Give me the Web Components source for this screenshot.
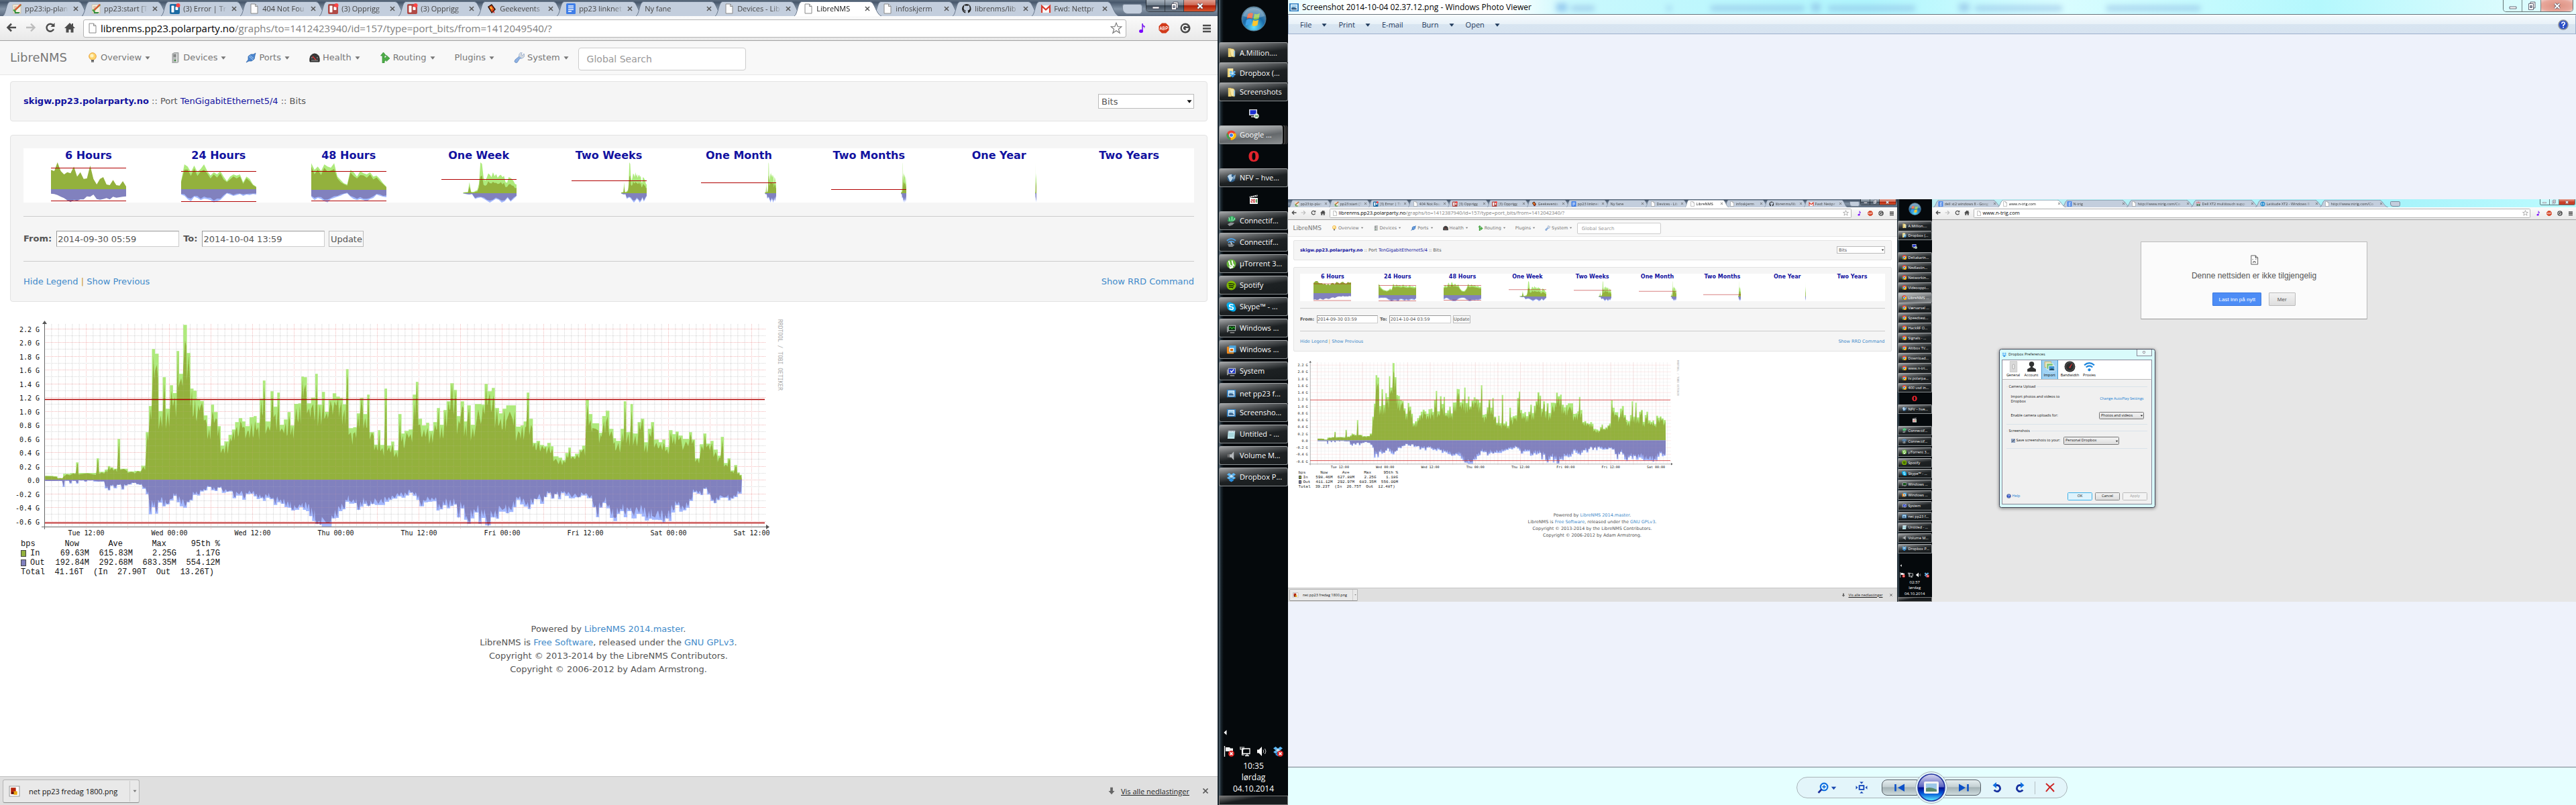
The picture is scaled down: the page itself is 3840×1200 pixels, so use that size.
<!DOCTYPE html>
<html lang="no">
<head>
<meta charset="utf-8">
<title>Desktop</title>
<style>
html,body{margin:0;height:100%;overflow:hidden}
body{font:11px/16px "Open Sans","Noto Sans",sans-serif;color:#111;background:#eef2fb}
</style>
</head>
<body>
<desk-top></desk-top>
<script>
const define = (name, css, html) => customElements.define(name, class extends HTMLElement {
  connectedCallback() {
    if (this.shadowRoot) return;
    const t = document.createElement('template');
    t.innerHTML = `<style>*{box-sizing:border-box}${css}</style>` + html(this);
    this.attachShadow({mode: 'open'}).append(t.content.cloneNode(true));
  }
});

/* ---------- icons ---------- */
const dbx = '<path d="M4.5 1 8 3.8 4.5 6.2 1 3.6zM11.5 1 15 3.6 11.5 6.2 8 3.8zM4.5 6.4 8 8.8 4.5 11.5 1 9zM11.5 6.4 15 9l-3.5 2.5L8 8.8z" fill="#5db8f8"/><path d="m8 9.4 3.5 2.6v1.2L8 15.4l-3.5-2.2V12z" fill="#2b8fe0"/><path d="m8 3.8 3.5 2.5L8 8.8 4.500 6.300z" fill="#bfe6ff"/>';
const monitor = '<path d="M3 3h12v9H3z" fill="#c8ccd0"/><path d="M6 14h7v1.500H6z" fill="#aaa"/><path d="M1 5h2v9H1z" fill="#9a9ea2"/>';
const badge = '<circle cx="11.500" cy="11.500" r="4.500" fill="#d22"/><path d="m9.500 9.500 4 4m0-4-4 4" stroke="#fff" stroke-width="1.600"/>';
const photo = '<path d="M1 2h14v12H1z" fill="#2f7fc2"/><path d="M3 3.500h10v9H3z" fill="#fff"/><path d="M4 4.500h8v4H4z" fill="#9fd0ee"/><path d="M4 8.500q4-2 8 1v2H4z" fill="#35608a"/>';
const ICONS = {
  leaf: '<path d="M2 2h10l2 2v11H3z" fill="#f4efe2" stroke="#c9b28a" stroke-width=".6"/><path d="m2 10 4-2 8-7 1 2-8 7-1 4z" fill="#4aa845"/><path d="m13 1-8 8 1 2 9-9z" fill="#e4512f"/><path d="m4 10 3 3 6 0-2 2H5z" fill="#2c8a3a"/><path d="M4 5h4M4 7h3" stroke="#c85" stroke-width=".8"/>',
  trelloB: '<rect x="0" y="1" width="15" height="15" rx="2" fill="#1a6aa3"/><rect x="2.500" y="3.500" width="4" height="10" rx=".8" fill="#fff"/><rect x="8.500" y="5" width="4" height="5" rx=".8" fill="#fff"/><circle cx="12.500" cy="3" r="3" fill="#f44"/>',
  trelloR: '<rect x="0" y="1" width="15" height="15" rx="2" fill="#b04a46"/><rect x="2.500" y="3.500" width="4" height="10" rx=".8" fill="#fff"/><rect x="8.500" y="5" width="4" height="5" rx=".8" fill="#fff"/><circle cx="12.500" cy="3" r="3" fill="#f44"/>',
  doc: '<path d="M3 1h6.500l3.500 3.500V15H3z" fill="#fdfdfd" stroke="#8a8a8a"/><path d="M9.500 1v3.500H13" fill="none" stroke="#8a8a8a"/>',
  gem: '<path d="m2 5 6-4 6 8-6 6z" fill="#2a1208"/><path d="m4 5 4-2 4 6-4 4z" fill="#e8541c"/><path d="m5 6 2-1 2 3-2 1z" fill="#f8c33a"/><path d="M9 12h3v3z" fill="#d22"/>',
  gdoc: '<rect x="1" width="14" height="16" rx="1.500" fill="#3f7ee8"/><path d="M4 4h8M4 6.700h8M4 9.400h8M4 12h5" stroke="#fff" stroke-width="1.300"/>',
  github: '<path d="M8 1a7 7 0 0 0-2.300 13.600c.4.100.5-.2.500-.4v-2c-2 .4-2.400-1-2.400-1-.5-1-1-1.200-1-1.200 1.400 0 1.600 1 1.600 1 .8 1 1.600.6 1.900.5 0-.5.300-.8.500-1-1.700-.2-3.300-.9-3.300-3.500 0-.8.300-1.400.7-2 0-.2-.3-1 .1-2 0 0 .6-.2 2 .7a7 7 0 0 1 3.600 0c1.400-.9 2-.7 2-.7.4 1 .1 1.800.1 2 .4.600.7 1.200.7 2 0 2.600-1.600 3.300-3.300 3.500.3.200.6.700.6 1.400v2c0 .3.100.5.500.4A7 7 0 0 0 8 1z" fill="#222"/>',
  gmail: '<path d="M1 3h14v11H1z" fill="#fafafa" stroke="#ddd" stroke-width=".5"/><path d="M2 14V4l6 5.500L14 4v10" fill="none" stroke="#d8392b" stroke-width="2.200"/>',
  google: '<rect x="1" y="0" width="14" height="16" rx="1" fill="#4a86e8"/><circle cx="8" cy="5.500" r="2.200" fill="none" stroke="#fff" stroke-width="1.400"/><circle cx="8" cy="11.500" r="2.400" fill="none" stroke="#fff" stroke-width="1.400"/><path d="M10 3.500 12 3" stroke="#fff"/>',
  dots: '<path d="M2 2h3v5H2zM6 1h4v5H6zM11 2h3v5h-3z" fill="#d48a94"/><path d="M3 8h4v6H3zM9 8h4v6H9z" fill="#4d7a58"/>',
  hp: '<circle cx="8" cy="8" r="7" fill="#2b8fd0"/><path d="M4 8h3m2 0h3M5 5v6m6-6v6" stroke="#fff" stroke-width="1.300"/>',
  back: '<path d="M15 8H3M8 2.500 2.500 8 8 13.500" fill="none" stroke="#4c4c4c" stroke-width="2.600"/>',
  fwd: '<path d="M1 8h12M8 2.500 13.500 8 8 13.500" fill="none" stroke="#bdbdbd" stroke-width="2.400"/>',
  reload: '<path d="M13 10.500A5.500 5.500 0 1 1 12.500 5" fill="none" stroke="#4c4c4c" stroke-width="2.400"/><path d="M14.500 1v6h-6z" fill="#4c4c4c"/>',
  home: '<path d="M8 1 0 9h2.500v6.500h4V11h3v4.500h4V9H16l-3-3V2h-2v2z" fill="#4c4c4c"/>',
  star: '<path d="m8 1 2 5h5l-4 3.300 1.600 5.200L8 11.300l-4.600 3.200L5 9.300 1 6h5z" fill="#fff" stroke="#777"/>',
  note: '<path d="M8 1v11" stroke="#7a1ff0" stroke-width="1.600"/><path d="M8 1q1 3 4 4-1 2-1 4 0-3-3-4z" fill="#7a1ff0"/><ellipse cx="6" cy="12.500" rx="3" ry="2.500" fill="#7a00ff"/>',
  abp: '<path d="M5 .5h6L15.500 5v6L11 15.500H5L.5 11V5z" fill="#d23a1a"/><path d="m2 10.500 1.500-5L5 10.500M2.600 9h1.800M6.500 10.500v-5h1q1.500 0 1.500 1.200T7.500 8Q9.300 8 9.300 9.300T7.500 10.500zM11 10.500v-5h1.300q1.500 0 1.500 1.500T12.300 8.500H11" fill="none" stroke="#fff"/>',
  gbadge: '<circle cx="8" cy="8" r="7.500" fill="#4a4a4a"/><path d="M11 5.500A4 4 0 1 0 11.600 9H8.500" fill="none" stroke="#fff" stroke-width="1.900"/>',
  menu: '<path d="M2 4h12M2 8.500h12M2 13h12" stroke="#4c4c4c" stroke-width="2.600"/>',
  bulb: '<circle cx="8" cy="6" r="5.300" fill="#ffd46b" stroke="#e8a23c"/><circle cx="7" cy="5" r="2.600" fill="#fff3c0"/><path d="M6 11h4v4H6z" fill="#8c8c8c"/><path d="M6 12.500h4" stroke="#444"/>',
  server: '<path d="m4 2 3-1.500h6v14L10 16H4z" fill="#b9bcbc" stroke="#878b8b" stroke-width=".7"/><path d="M5.500 4h4M5.500 6h4" stroke="#555"/><circle cx="8" cy="12" r="1.300" fill="#3b8a3b"/><path d="M10.500 2v13" stroke="#eee"/>',
  plug: '<path d="m1 15 3-4 0-5 4-3 4 0 3-2-1 4-1 5-4 3-4 0z" fill="#4a86cf" stroke="#2a5fa5" stroke-width=".7"/><path d="m5 6 6 5M7 5l5 4" stroke="#b7d5f5"/>',
  gauge: '<path d="M1 14Q-.5 3 8 2q8.500 1 7 12z" fill="#3a3a3a" stroke="#222"/><path d="m5 6 5 5.500" stroke="#e33" stroke-width="1.200"/><path d="M3 12h10" stroke="#999"/><circle cx="4" cy="8" r=".7" fill="#ddd"/><circle cx="12" cy="8" r=".7" fill="#ddd"/>',
  route: '<path d="M4 16V5H1.500L5.500 0l4 5H7v4l3-2V4.500l5 4.500-5 4.500V11l-3 2.500V16z" fill="#4fae48" stroke="#2e8a30" stroke-width=".7"/>',
  wrench: '<path d="M2 15q-2-1 0-4l6-5q-1-5 4-6l-1 4 2 1 2-3q2 5-3 7l-3 0-4 6q-1 1-3 0z" fill="#8fb3e4" stroke="#5a7fb5" stroke-width=".7"/><path d="M8 6q-1-5 4-6l-1 4 2 1 2-3q2 5-3 7z" fill="#d3d8de"/>',
  caret: '<path d="M4 6h8l-4 5z" fill="currentColor"/>',
  folder: '<path d="M3 1h5v14H3z" fill="#e9cf73"/><path d="M5 2h6l2 2v11l-5-1z" fill="#f6e6a4" stroke="#c7a84a" stroke-width=".6"/><path d="M12 5h2v9h-2z" fill="#8dbcdc"/>',
  folderdb: '<path d="M2 1h5v14H2z" fill="#e9cf73"/><path d="M4 1h7v12H4z" fill="#f6e6a4"/><g transform="translate(4 4) scale(.75)">' + dbx + '</g>',
  rdp: '<path d="M1 2h12v9H1z" fill="#d8dce0"/><path d="M2.500 3.300h9v6.300h-9z" fill="#1a2ed0"/><path d="M4 12h6v2H4z" fill="#aaa"/><circle cx="12" cy="12" r="3.700" fill="#e9efe6"/><path d="m10 10.500 2 1.500-2 1.500m4.500-3L12.500 12l2 1.500" stroke="#2a8a2a" fill="none"/>',
  chrome: '<circle cx="8" cy="8" r="7.500" fill="#ea4335"/><path d="M1.500 4.300 5 11l2 4.400A7.500 7.500 0 0 1 1.500 4.300z" fill="#34a853"/><path d="M8 5h7a7.500 7.500 0 0 1-8 10.500z" fill="#fbbc05"/><circle cx="8" cy="8" r="3.600" fill="#fff"/><circle cx="8" cy="8" r="2.700" fill="#3d7be8"/>',
  opera: '<path fill-rule="evenodd" d="M8 0c5 0 7.500 3.500 7.500 8S13 16 8 16 .5 12.500.5 8 3 0 8 0zm0 2.500C6 2.500 5.500 5 5.500 8S6 13.500 8 13.500 10.500 11 10.500 8 10 2.500 8 2.500z" fill="#e2242c"/>',
  globe: '<circle cx="8" cy="8" r="6.500" fill="#2d5d8a"/><path d="M2 5q3-4 7-3l-1 3 3 2-2 4-3 3-2-5z" fill="#b9d4e8"/><path d="m11 5 4-3-1 6-3 3z" fill="#87a9c5"/>',
  clap: '<path d="M2 6h12v9H2z" fill="#f4f4f4"/><path d="m1.500 4 12-2.500.5 2L2 6z" fill="#eee"/><path d="m3 4 1 1.500M6 3.500 7 5m2-2 1 1.500M12 2l1 1.500" stroke="#111"/><path d="M4 8.500h2v2H4v2h2m1.500-4h2v4h-2z" stroke="#c33" fill="none"/><path d="M12 8v5" stroke="#2a8a2a" stroke-width="1.500"/>',
  conG: '<path d="M2 8Q4 0 9 0q5 1 6 6l-5 3-5 0z" fill="#2fae5c"/><path d="m6 8-2-6m5 6V1m2 7 3-5" stroke="#c9f5d6"/><path d="m2 13 5-3 6 1-3 3-5 2z" fill="#8b9194"/>',
  conB: '<path d="M1 5q7-6 14 0M3 8q5-4 10 0" stroke="#4aa0e8" stroke-width="2" fill="none"/><path d="M2 10h8l3 2-3 3-6 0z" fill="#7d8386"/><path d="m7 7 2 4" stroke="#bcd" stroke-width="2"/>',
  utor: '<circle cx="8" cy="8" r="7.500" fill="#67b43c"/><path d="m4 3 2 7q1 2 3 1l1 2q-2 1.500-4 .5l1 2M9 2.500l1.500 6q.5 2 2.500 1.500" fill="none" stroke="#fff" stroke-width="2"/>',
  spot: '<circle cx="8" cy="8" r="7.500" fill="#7fb800"/><path d="M3.500 5.500q5-1.500 9.500 1M4 8.300q4-1.200 8 .8M4.500 11q3.500-1 6.500.8" fill="none" stroke="#12200a" stroke-width="1.500"/>',
  skype: '<circle cx="5" cy="5" r="4.500" fill="#00aff0"/><circle cx="11" cy="11" r="4.500" fill="#00aff0"/><circle cx="8" cy="8" r="6.500" fill="#00aff0"/><path d="M11 5.500Q10 4 8 4 5 4 5 6t3 2 3 2-3 2q-2.500 0-3-1.500" fill="none" stroke="#fff" stroke-width="1.800"/>',
  perf: monitor + '<path d="M4 4h10v7H4z" fill="#0b2a10"/><path d="m4 8 3-2 2 3 2-3 3 2" stroke="#3f3" fill="none"/>',
  vm: '<rect x="1" y="3" width="11" height="11" rx="1" fill="#f08a1c"/><rect x="4.500" y="1" width="11" height="11" rx="1" fill="#4ba4dc"/><path d="M5 5h7v6H5z" fill="#fff"/><path d="M6.300 6.300h4.500v3.500H6.300z" fill="#c60"/>',
  sys: monitor + '<path d="M4 4h10v7H4z" fill="#2038c8"/><path d="m6.500 7 2 2.500L12 5" stroke="#fff" fill="none" stroke-width="1.500"/>',
  photo,
  pad: '<path d="M3 2h11l-1 13H2z" fill="#bfe6ec"/><path d="M4 2h10v2H3z" fill="#e9f7fa"/><path d="M3.500 1v3m2.500-3v3m2.500-3v3M11 1v3m2-3v3" stroke="#778" stroke-width=".8"/><path d="M4 7h8M4 9h8m-8 2h8" stroke="#7fb6bf" stroke-width=".7"/>',
  vol: '<path d="M5 5.500h3L12 1v14L8 10.500H5z" fill="#b5b9bc"/><path d="M2 5.500h2v5H2z" fill="#777"/>',
  dropbox: dbx,
  flag: '<path d="M1.500 0v16" stroke="#fff" stroke-width="1.300"/><path d="M3 2h6l1 1.500h4V9H9L8 8H3z" fill="#f4f4f4"/>' + badge,
  net: '<path d="M4.500 4h10.500v7.500H4.500zM8 14.500h6M11 12v2.500" fill="none" stroke="#fff" stroke-width="1.300"/><path d="M1 1v4h5V1M3.500 1v3m0 1v8.500h3" fill="none" stroke="#fff" stroke-width="1.100"/>',
  spk: '<path d="M1 5.500h2.500L8 1v14L3.500 10.500H1z" fill="#fff"/><path d="M10 5.500q1.500 2.500 0 5M12.500 4q3 4 0 8" fill="none" stroke="#ccc"/>',
  dbxerr: dbx + badge,
  left: '<path d="M10 3v10L4.500 8z" fill="#fff"/>',
  thumbfile: '<path d="M1 1h14v14H1z" fill="#fff" stroke="#999"/><path d="M3 3h7v9H3z" fill="#b4240c"/><path d="M7 8h5v5H7z" fill="#e9a713"/><path d="M4 9h3v3H4z" fill="#511"/>',
  dl: '<path d="M5.500 1h5v7H14l-6 7-6-7h3.500z" fill="#666"/>',
  sad: '<path d="M3 1h7l3.500 3.500V15H3z" fill="#fff" stroke="#555"/><path d="M10 1v3.500h3.500M5 7h1m4 0h1M6 12.500q0-2 2-2t2 2" fill="none" stroke="#555" stroke-width="1.200"/>',
  gswitch: '<rect x="3" width="10" height="16" rx="1" fill="#d9d9d9" stroke="#aaa" stroke-width=".4"/><rect x="6.800" y="5" width="2.400" height="6" rx="1" fill="#fff" stroke="#777" stroke-width=".5"/>',
  person: '<circle cx="8" cy="4.500" r="3.500" fill="#333"/><path d="M6.500 6h3v3l4.500 2.500V15H2v-3.500L6.500 9z" fill="#333"/>',
  pics: '<path d="M1 1h9v8H1z" fill="#e6ddb5" stroke="#b79a3c" stroke-width=".6"/><path d="M3.500 3.500h9v8h-9z" fill="#7cc576" stroke="#fff" stroke-width=".7"/><path d="M6.500 7h8.500v7H6.500z" fill="#3f93cf" stroke="#fff" stroke-width=".8"/><path d="M7 13q4-5 8 0z" fill="#245"/>',
  dial: '<circle cx="8" cy="8" r="7.500" fill="#2d2d2d"/><circle cx="8" cy="8" r="5.800" fill="none" stroke="#777" stroke-width=".6"/><path d="m8 9 2.800-4.500" stroke="#e33"/><circle cx="8" cy="9" r="1" fill="#e33"/>',
  wifi: '<path d="M1 6q7-6 14 0M3.500 9q4.500-4 9 0" fill="none" stroke="#1e86dc" stroke-width="2"/><circle cx="8" cy="12.500" r="2" fill="#1e86dc"/>',
  help: '<circle cx="8" cy="8" r="7" fill="#2b50c8" stroke="#8a8f98" stroke-width="1.600"/><path d="M5.800 6.300Q6 4 8.100 4t2.200 2Q10.300 7 8.100 8.500V10m0 1v1.600" fill="none" stroke="#fff" stroke-width="1.700"/>',
  zoom: '<circle cx="9.500" cy="6.500" r="5" fill="none" stroke="#0f6fe0" stroke-width="2"/><path d="M9.500 4v5M7 6.500h5" stroke="#0f6fe0" stroke-width="1.600"/><path d="M6 10 1.500 15" stroke="#1a2a9a" stroke-width="2.600"/>',
  fit: '<path d="M5 5.500h6v5H5z" fill="none" stroke="#0b3fb8" stroke-width="1.600"/><path d="M5.500.5h5L8 3zM5.500 15.500h5L8 13zM.5 5.500v5L3 8zM15.500 5.500v5L13 8z" fill="#1444b4"/>',
  prev: '<path d="M1.500 3v10.500" stroke="#0b50c8" stroke-width="2.600"/><path d="M15 2.500v11.500L5 8.200z" fill="#0b50c8"/>',
  next: '<path d="M14.500 3v10.500" stroke="#0b50c8" stroke-width="2.600"/><path d="M1 2.500v11.500l10-5.800z" fill="#0b50c8"/>',
  ccw: '<path d="M4 4.500h4.500a4.700 4.700 0 1 1-4.700 7" fill="none" stroke="#17309e" stroke-width="2.800"/><path d="M7 0v9L1.500 4.500z" fill="#0f6fe0"/>',
  cw: '<path d="M12 4.500H7.500a4.700 4.700 0 1 0 4.700 7" fill="none" stroke="#17309e" stroke-width="2.800"/><path d="M9 0v9l5.500-4.500z" fill="#0f6fe0"/>',
  del: '<path d="M2 2q6 5 12 12M14 2Q7 7 2 14" fill="none" stroke="#cc2222" stroke-width="2"/>',
  min: '<path d="M3 9h10v3H3z" fill="#fff" stroke="#445" stroke-width=".8"/>',
  max: '<path d="M6 2h7v9H6z" fill="#eee" stroke="#445" stroke-width=".8"/><path d="M3.500 4.500h7v9h-7z" fill="#fff" stroke="#445" stroke-width=".8"/><path d="M5.700 7.500h2.600v3H5.700z" fill="#9ab" stroke="#445" stroke-width=".8"/>',
  cls: '<path d="m4 4 8 8m0-8-8 8" stroke="#445" stroke-width="4.200"/><path d="m4 4 8 8m0-8-8 8" stroke="#fff" stroke-width="2.600"/>',
  x: '<path d="m4.500 4.500 7 7m0-7-7 7" stroke="#555" stroke-width="1.700"/>'
};
define('ui-icon', ':host{display:inline-block;flex:none;width:var(--s,16px);height:var(--s,16px)}svg{display:block;width:100%;height:100%}',
  e => `<svg viewBox="0 0 16 16" aria-hidden="true">${ICONS[e.getAttribute('name')] || ''}</svg>`);
const ic = (n, s = 16) => `<ui-icon name="${n}" style="--s:${s}px"></ui-icon>`;

/* ---------- caption buttons ---------- */
define('caption-buttons', `
:host{display:flex;flex:none;height:18px;border:1px solid #0008;border-top:0;border-radius:0 0 5px 5px;overflow:hidden}
button{border:0;border-right:1px solid #0007;padding:0;width:28px;display:grid;place-items:center;background:linear-gradient(#a9b4bf,#6b7886 50%,#3b4754 50%,#6f7d8c)}
button:last-child{width:47px;border:0;background:linear-gradient(#e0a091,#cd5f49 50%,#b1210a 50%,#d4552f)}
:host([glass]) button{background:#d8fbfd99}
:host([glass]) button:last-child{background:radial-gradient(#dc9080,#e8a79b 70%,#f0d0cc)}
:host([glass=soft]) button:last-child{background:linear-gradient(#e6a18f,#c9422b 50%,#c43a22)}`,
  () => `<button aria-label="Minimize">${ic('min')}</button><button aria-label="Restore">${ic('max')}</button><button aria-label="Close">${ic('cls', 14)}</button>`);

/* ---------- browser ---------- */
define('browser-tab', `
:host{position:relative;display:flex;align-items:center;gap:4px;flex:0 0 var(--tab,118px);height:22px;padding:0 0 0 13px;color:#444;--f:#c3cedd}
:host([active]){--f:#fff;z-index:2;color:#111}
.shape{position:absolute;left:0;top:0;width:calc(100% + 12px);height:22px;z-index:-1}
span{flex:1;overflow:hidden;white-space:nowrap;-webkit-mask:linear-gradient(90deg,#000 80%,transparent);mask:linear-gradient(90deg,#000 80%,transparent)}
button{border:0;background:none;padding:0;width:14px;height:14px;margin-right:2px}`,
  e => `<svg class="shape" viewBox="0 0 130 22" preserveAspectRatio="none"><path d="M0 22C5 20 5 1 11 .5H113C120 1 122 20 130 22" fill="var(--f)" stroke="#67768a"/></svg>
${e.getAttribute('icon') ? ic(e.getAttribute('icon')) : ''}<span><slot></slot></span><button aria-label="Close tab">${ic('x', 14)}</button>`);

define('browser-window', `
:host{display:flex;flex-direction:column;min-width:0;height:100%;background:#fff;border-right:2px solid #16222b}
:host([glass]){border:0}
.strip{display:flex;height:24px;padding:2px 2px 0 4px;align-items:flex-start;position:relative;z-index:0;background:linear-gradient(#5b6b7d,#47576b 15%,#8494a6 55%,#5c6c80)}
:host([glass]) .strip{background:linear-gradient(90deg,#bdeef2,#a5f3fa 70%,#bdfbff);--tab:192px}
.new{flex:none;width:30px;height:15px;margin:4px 0 0 17px;padding:0;border:1px solid #7c8a9c;background:#c3cedd;border-radius:3px 4px 5px 8px}
caption-buttons{margin:-2px 0 0 auto}
.bar{display:flex;align-items:center;height:37px;padding:0 8px 0 9px;background:linear-gradient(#fbfbfb,#e9e9e9);border-bottom:1px solid #a2a2a2}
.bar>button{border:0;background:none;padding:0;height:18px;margin-right:13px}
.bar>button.end{margin:0 0 0 16px;height:16px}
.url{flex:1;display:flex;align-items:center;height:27px;border:1px solid #b4b4b4;border-radius:3px;background:#fff;padding:0 5px;gap:4px;margin-left:-1px;font:15px/22px "Open Sans",sans-serif;color:#808080}
.url b{font-weight:400;color:#000}
.url p{flex:1;margin:0;white-space:nowrap}
.body{flex:1;min-height:0;display:flex;flex-direction:column}
`, e => {
  const g = e.hasAttribute('glass');
  const tabs = g
    ? [['google', 'dell xt2 windows 8 - Goog'], ['doc', 'www.n-trig.com', 1], ['google', 'N-trig'], ['doc', 'http://www.ntrig.com/Co'], ['dots', 'Dell XT2 multitouch supp'], ['hp', 'Latitude XT2 - Windows 8'], ['doc', 'http://www.ntrig.com/Co']]
    : [['leaf', 'pp23:ip-plan'], ['leaf', 'pp23:start [T'], ['trelloB', '(3) Error | Tr'], ['doc', '404 Not Fou'], ['trelloR', '(3) Opprigg'], ['trelloR', '(3) Opprigg'], ['gem', 'Geekevents'], ['gdoc', 'pp23 linknet'], ['', 'Ny fane'], ['doc', 'Devices - Lib'], ['doc', 'LibreNMS', 1], ['doc', 'infoskjerm'], ['github', 'librenms/lib'], ['gmail', 'Fwd: Nettpr']];
  return `<div class="strip">${tabs.map(t => `<browser-tab icon="${t[0]}" ${t[2] ? 'active' : ''}>${t[1]}</browser-tab>`).join('')}<button class="new" aria-label="New tab"></button><caption-buttons ${g ? 'glass="soft"' : ''}></caption-buttons></div>
<div class="bar"><button aria-label="Back">${ic('back')}</button><button aria-label="Forward">${ic('fwd')}</button><button aria-label="Reload">${ic('reload')}</button><button aria-label="Home">${ic('home')}</button>
<div class="url">${ic('doc')}<p><b>${e.getAttribute('host')}</b>${e.getAttribute('path') || ''}</p>${ic('star', 18)}</div>
${['note', 'abp', 'gbadge', 'menu'].map(n => `<button class="end" aria-label="${n}">${ic(n)}</button>`).join('')}</div>
<div class="body"><slot></slot></div>`;
});

define('download-shelf', `
:host{display:flex;align-items:center;height:43px;margin-top:auto;padding:0 10px 0 4px;background:#dfdfdf;border-top:1px solid #c4c4c4;flex:none}
.item{display:flex;align-items:center;height:35px;width:204px;padding:0 0 0 8px;border:1px solid #b5b5b5;border-bottom-color:#8d8d8d;border-radius:3px;background:#e9e9e9;font:inherit;gap:13px;color:#111}
.item span{flex:1;text-align:left;white-space:nowrap}
.item i{width:14px;height:31px;border-left:1px solid #ccc;display:grid;place-items:center;color:#777}
a{display:flex;align-items:center;gap:8px;margin-left:auto;color:#222}
button.c{border:0;background:none;padding:0;margin-left:16px;height:16px}`,
  () => `<button class="item">${ic('thumbfile', 17)}<span>net pp23 fredag 1800.png</span><i>${ic('caret', 10)}</i></button><a href="#">${ic('dl', 12)}Vis alle nedlastinger</a><button class="c" aria-label="Close">${ic('x')}</button>`);

/* ---------- traffic chart ---------- */
const IN = '88,750;104,752;112,760;123,741;137,738;148,690;153,737;188,672;193,732;204,722;210,706;215,712;221,718;229,585;234,718;249,730;262,728;275,705;284,555;290,438;296,183;302,204;309,460;317,309;323,450;331,345;337,380;344,192;349,294;357,75;364,201;371,360;377,369;383,406;390,415;397,480;404,528;411,432;417,465;424,528;430,615;437,596;445,567;452,543;458,510;465,492;472,507;478,528;486,488;494,483;500,513;506,405;512,324;517,507;527,372;533,441;540,378;545,522;553,498;560,465;566,525;573,428;581,426;587,306;592,309;598,426;606,400;614,294;619,432;627,375;633,464;640,411;648,381;655,396;662,402;668,430;674,273;679,537;688,532;695,471;701,402;708,474;715,387;720,555;729,610;736,546;741,612;749,360;754,615;762,597;768,636;776,474;782,561;788,549;796,543;804,387;810,330;815,495;822,525;830,513;836,549;844,510;851,447;857,522;864,456;870,417;877,336;884,366;890,483;897,417;904,507;910,435;917,522;925,429;938,432;944,339;950,372;958,357;964,447;972,471;979,450;986,435;1000,435;1005,530;1014,525;1020,507;1026,378;1031,495;1038,603;1045,594;1052,612;1060,618;1066,603;1073,618;1078,663;1088,669;1095,680;1101,648;1107,624;1112,663;1120,651;1128,633;1134,615;1141,408;1147,474;1154,515;1167,558;1173,483;1180,459;1187,540;1195,582;1200,594;1209,540;1215,417;1220,555;1228,429;1233,561;1242,510;1248,495;1255,600;1262,540;1268,510;1274,588;1283,600;1290,588;1296,621;1303,546;1310,564;1316,552;1322,570;1330,585;1342,555;1348,588;1354,672;1363,609;1370,561;1376,606;1384,594;1390,633;1398,660;1404,576;1410,693;1417,672;1423,726;1430,702;1436,735;1441,745;1445,767';
const OUT = '88,773;122,800;126,772;135,784;140,772;148,784;153,771;164,776;170,771;182,776;204,806;210,815;215,795;221,806;228,790;236,811;242,793;249,789;257,782;265,788;270,790;277,808;284,833;290,922;296,890;302,919;308,870;316,886;323,878;331,860;338,840;344,868;350,886;357,893;364,868;370,860;376,835;384,838;390,820;397,815;404,800;411,814;418,818;424,803;432,826;440,822;446,820;453,850;460,838;472,857;479,832;487,830;494,842;500,854;506,850;512,862;518,848;525,855;533,880;540,868;547,875;554,890;561,893;567,905;575,902;583,890;590,902;596,908;602,930;608,952;614,965;622,968;627,976;646,940;654,938;660,908;667,900;673,866;680,874;690,872;695,902;702,888;708,876;714,884;722,876;730,880;744,880;750,866;758,858;764,852;774,842;782,848;790,838;797,826;804,840;811,858;817,886;826,868;834,866;842,864;850,905;856,900;863,882;870,895;877,885;884,878;890,936;897,896;904,946;910,965;917,940;924,914;932,965;938,938;945,972;956,936;966,942;972,910;985,917;992,912;1000,890;1006,858;1013,878;1020,888;1028,898;1034,878;1040,855;1052,875;1060,845;1066,828;1073,852;1080,832;1087,855;1093,828;1100,840;1108,850;1120,846;1132,838;1143,850;1154,890;1161,935;1167,892;1174,872;1181,895;1188,938;1195,952;1202,920;1208,908;1215,935;1222,908;1230,940;1240,920;1250,932;1256,950;1264,942;1270,946;1282,948;1290,957;1296,940;1303,952;1308,914;1315,882;1323,910;1330,904;1337,893;1343,862;1350,824;1357,830;1364,836;1370,808;1377,834;1384,862;1390,872;1396,858;1403,848;1418,860;1424,852;1430,845;1437,830;1445,767';
const parse = s => s.split(';').map(p => p.split(',').map(Number));
const ZERO = 245;
function area(src, mapX, endX, avg) {
  const pts = parse(src), out = [];
  let seed = 7;
  const rnd = () => (seed = (seed * 16807) % 2147483647) / 2147483647;
  const put = (x, h) => { if (x <= endX) out.push(x.toFixed(1) + ' ' + (ZERO + h).toFixed(1)); };
  for (let i = 0; i < pts.length - 1; i++) {
    const a = mapX(pts[i][0]), b = mapX(pts[i + 1][0]), h = (pts[i][1] - 767) / 3;
    if (!avg) { put(a, h); put(Math.min(b, endX), h); continue; }
    const prev = i ? (pts[i - 1][1] - 767) / 3 : h;
    const near = h < 0 ? Math.max(h, prev) : Math.min(h, prev);
    put(a, (near * .6 + h * .4) * (avg - rnd() * .22));
    put((a + b) / 2, h * (avg + .08 - rnd() * .1));
    put(b - 1, h * (avg - rnd() * .25));
  }
  const start = mapX(pts[0][0]), end = Math.min(mapX(1445), endX);
  return `M${start.toFixed(1)} ${ZERO}L${out.join('L')}L${end} ${ZERO}z`;
}
define('traffic-chart', `
:host{display:block;color:#111}
svg{display:block}
text{font:10px "DejaVu Sans Mono",monospace;fill:#111}
text.w{writing-mode:vertical-rl;font-size:8px;fill:#aaa}
table{border-collapse:collapse;margin-left:31px;font:12px/14px "Liberation Mono",monospace;white-space:pre}
td,th{padding:0;width:65px;text-align:right;font-weight:400}
td:first-child,th:first-child{text-align:left;width:37px}
td:first-child{display:flex;align-items:center;gap:6px;width:37px}
th:nth-child(n+2){padding-right:15px}th:last-child{padding-right:0}
i{width:8px;height:10px;border:1px solid #444;background:var(--c)}
p{margin:0 0 0 31px;font:12px/14px "Liberation Mono",monospace;white-space:pre}`, e => {
  const old = e.getAttribute('set') === 'night';
  const step = old ? 134.6 : 124, first = old ? 154.7 : 128.5, end = old ? 1126 : 1106;
  const mapX = u => { const x = u / 1.3067; return old ? Math.max(66, first + (x - 128.5) * 1.0855) : x; };
  let g = '', labels = '';
  for (let x = first - step / 2; x < 1141; x += step / 12) g += `<path d="M${x.toFixed(1)} 13V315" stroke="#ccc" stroke-dasharray="1 1"/>`;
  for (let x = first - step / 2; x < 1141; x += step / 2) g += `<path d="M${x.toFixed(1)} 13V318" stroke="#f3b0b0" stroke-dasharray="1 1"/>`;
  for (let k = -6; k <= 22; k++) {
    const y = Math.round(ZERO - k * 10.250) + .5, major = k % 2 === 0;
    g += `<path d="M66 ${y}H1142" stroke="${major ? '#f5a8a8' : '#d0d0d0'}" stroke-dasharray="1 1"/>`;
    if (major) labels += `<text x="59" y="${y + 4}" text-anchor="end">${k === 0 ? '0.0  ' : (k / 10).toFixed(1) + ' G'}</text>`;
  }
  const names = ['Tue 12:00', 'Wed 00:00', 'Wed 12:00', 'Thu 00:00', 'Thu 12:00', 'Fri 00:00', 'Fri 12:00', 'Sat 00:00', 'Sat 12:00'];
  names.forEach((n, i) => { if (first + i * step < 1130) labels += `<text x="${first + i * step}" y="328" text-anchor="middle">${n}</text>`; });
  const d = old ? [['598.46M', '627.88M', '2.25G', '1.18G'], ['411.12M', '292.97M', '683.35M', '556.00M'], 'Total  39.23T  (In  26.75T  Out  12.48T)']
                : [['69.63M', '615.83M', '2.25G', '1.17G'], ['192.84M', '292.68M', '683.35M', '554.12M'], 'Total  41.16T  (In  27.90T  Out  13.26T)'];
  const row = (n, c, v) => `<tr><td><i style="--c:${c}"></i>${n}</td>${v.map(x => `<td>${x}</td>`).join('')}</tr>`;
  return `<svg width="1180" height="334" viewBox="0 0 1180 334">
<g opacity=".8">${g}</g>
<path d="${area(IN, mapX, end, 0)}" fill="#aeea7c"/><path d="${area(IN, mapX, end, .92)}" fill="#93b13d"/>
<path d="${area(OUT, mapX, end, 0)}" fill="#a3b8ff"/><path d="${area(OUT, mapX, end, .95)}" fill="#8181be"/>
<g opacity=".18">${g}</g><path d="M66 ${old ? 124.5 : 125.5}H1140M66 ${old ? 305 : 309.500}H1140" stroke="${old ? '#d03030' : '#b00000'}" stroke-width="1.500"/>
<path d="M66.500 12V319M62 315.500H1143" stroke="#666" fill="none"/><path d="m63 13 3.500-5 3.500 5zM1142 312l5 3.500-5 3.500z" fill="#555"/>
${labels}<text class="w" x="1162" y="6">RRDTOOL / TOBI OETIKER</text></svg>
<table><tr><th>bps</th><th>Now</th><th>Ave</th><th>Max</th><th>95th %</th></tr>${row('In', '#93b13d', d[0])}${row('Out', '#8181be', d[1])}</table><p>${d[2]}</p>`;
});

/* ---------- period thumbnails ---------- */
const long = [.02,.03,.04,.04,.36,.05,.04,.05,.08,.1,.3,1,.95,.5,.4,.5,.64,.6,.52,.68,.55,.62,.5,.57,.6,.52,.56,.36,.34,.52,.5,.46,.4,.3,.28];
const longD = [.02,.1,.15,.1,.6,.5,.45,.6,.8,1,.8,.6,.7,1,.85,.5,.9,.6,.3];
const T = {
  day: [
    ['6 Hours', [86,81,120,81,66,76,71,101,56,76,46,48,106,46,21,46,54,21,18,41,18,16,36,12], [20,22,26,34,40,50,58,49,52,46,46,32,34,24,44,47,44,40,46,34,38,36,34,32], 40, 0, [8.5, 57.5]],
    ['24 Hours', [36,111,101,76,106,76,91,111,81,61,76,66,81,56,36,56,66,61,66,31,56,46,21,11], [24,29,44,54,34,39,49,42,44,49,59,54,49,34,19,24,30,26,22,30,24,26,22,24], 40, 0, [13.5, 58.5], 1],
    ['48 Hours', [119,89,104,84,114,104,99,119,59,44,29,24,89,79,59,84,74,69,79,59,64,49,29,14], [31,46,36,41,51,56,41,36,31,26,19,16,31,41,46,41,46,51,41,36,21,26,31,33], 41, 0, [13.5, 57.5], 1]],
  night: [
    ['6 Hours', [92,104,120,95,88,90,80,86,72,84,70,88,92,78,100,96,84,98,102,90,84,100,94,96], [58,56,60,58,48,54,58,50,46,52,50,40,38,44,36,30,28,32,26,30,28,30,26,28], 36, 0, [8, 58]],
    ['24 Hours', [104,80,60,50,44,40,44,60,50,104,80,96,84,90,78,96,80,84,74,90,76,80,70,84], [30,26,24,26,24,28,40,50,58,50,44,50,56,40,36,44,50,42,48,46,36,40,44,30], 42, 0, [13, 59], 1],
    ['48 Hours', [70,90,76,112,84,120,90,104,86,96,60,44,36,40,60,104,80,96,84,90,78,82,70,76], [40,30,26,36,44,50,56,58,46,36,28,26,24,28,40,50,56,50,44,50,42,48,40,36], 42, 0, [13, 57], 1]]
};
const LONG = [['One Week', .29, 25.5], ['Two Weeks', .66, 27.5], ['One Month', .85, 30.5], ['Two Months', .93, 40.5], ['One Year', .985, 0], ['Two Years', 1, 0]]
  .map(([n, s, r]) => [n, s < 1 ? long.map(v => v * 138) : [], longD.map(v => v * 42), 46, s, r ? [r] : [], 1]);
define('period-thumb', `
:host{display:block;flex:1;text-align:center}
a{display:block;color:#1212a0;text-decoration:none;font:bold 16px/21px "DejaVu Sans",sans-serif}
svg{display:block;margin:0 auto}`, e => {
  const [name, up, down, z, s, red, soft] = [...T[e.getAttribute('set')], ...LONG][+e.getAttribute('index')];
  const poly = (v, dir, k) => v.length ? `M${s * 112} ${z}` + v.map((h, i) => `L${(s * 112 + (1 - s) * 112 * i / (v.length - 1)).toFixed(1)} ${(z + dir * Math.min(h * k * (i % 2 && k < 1 ? .9 : 1), 180) / 3).toFixed(1)}`).join('') + `L112 ${z}z` : '';
  const dn = up.length ? down : [];
  return `<a href="#">${name}<svg width="112" height="60" viewBox="0 0 112 60"><path d="${poly(up, -1, 1)}" fill="${soft ? '#aeea7c' : '#93b13d'}"/><path d="${poly(up, -1, s ? .6 : .87)}" fill="#93b13d"/><path d="${poly(dn, 1, 1)}" fill="${soft ? '#a3b8ff' : '#8181be'}"/><path d="${poly(dn, 1, .87)}" fill="#8181be"/>${red.map(y => `<path d="M0 ${y}H112" stroke="#b00000"/>`).join('')}</svg></a>`;
});

/* ---------- LibreNMS page ---------- */
define('libre-page', `
:host{display:flex;flex-direction:column;flex:1;min-height:0;font:13px/20px "DejaVu Sans",sans-serif;color:#555}
a{color:#428bca;text-decoration:none}
nav{display:flex;align-items:center;height:51px;background:#f8f8f8;border-bottom:1px solid #e7e7e7;padding-left:15px;flex:none}
nav a{color:#777;display:flex;align-items:center;padding:0 15px;gap:4px}
nav a ui-icon:last-child{margin:0 -4px 0 -2px}
nav a.brand{font-size:18px;padding:0 15px 0 0}
nav input{width:250px;height:34px;margin:4px 0 0;padding:0 12px;border:1px solid #ccc;border-radius:4px;font:14px "DejaVu Sans",sans-serif}
nav input::placeholder{color:#999}
.well{margin:0 15px 20px;padding:19px;background:#f5f5f5;border:1px solid #e3e3e3;border-radius:4px;flex:none}
.head{display:flex;align-items:center;justify-content:space-between;height:60px;margin-top:9px}
.head a{color:#1212a0}
.sel{display:grid;width:143px;height:22px;color:#111}
.sel>*{grid-area:1/1}
.sel ui-icon{justify-self:end;align-self:center;pointer-events:none}
select{appearance:none;border:1px solid #bbb;background:#fff;font:13px "DejaVu Sans",sans-serif;color:#555;padding:0 4px}
.thumbs{display:flex;background:#fff;height:81px}
hr{border:0;border-top:1px solid #ccc;margin:20px 0;height:0}
form{display:flex;align-items:center;height:26px;font-weight:bold}
form input{width:183px;height:24px;margin:0 6px 0 7px;border:1px solid #ccc;border-top-color:#999;border-left-color:#999;padding:0 1px;font:13px "DejaVu Sans",sans-serif;color:#555;background:#fff}
form button{height:24px;width:52px;padding:0;border:1px solid #bbb;background:#f8f8f8;font:13px "DejaVu Sans",sans-serif;color:#555;white-space:nowrap}
.links{display:flex;justify-content:space-between}
.links i{color:#c93;font-style:normal}
footer{margin:68px 0 0;text-align:center;padding-right:1px}`, e => {
  const set = e.getAttribute('set'), h = set === 'night' ? '03:59' : '', from = h || '05:59', to = h || '13:59';
  const nav = [['bulb', 'Overview'], ['server', 'Devices'], ['plug', 'Ports'], ['gauge', 'Health'], ['route', 'Routing'], ['', 'Plugins'], ['wrench', 'System']];
  return `<nav><a class="brand" href="#">LibreNMS</a>${nav.map(n => `<a href="#">${n[0] ? ic(n[0]) : ''}${n[1]}${ic('caret', 14)}</a>`).join('')}<input type="text" aria-label="Global Search" placeholder="Global Search"></nav>
<div class="well head"><span><a href="#"><b>skigw.pp23.polarparty.no</b></a> :: Port <a href="#">TenGigabitEthernet5/4</a> :: Bits</span><span class="sel"><select aria-label="Graph type"><option>Bits</option></select>${ic('caret', 14)}</span></div>
<div class="well"><div class="thumbs">${[0,1,2,3,4,5,6,7,8].map(i => `<period-thumb set="${set}" index="${i}"></period-thumb>`).join('')}</div><hr>
<form><label for="f">From:</label><input id="f" value="2014-09-30 ${from}"><label for="t">To:</label><input id="t" value="2014-10-04 ${to}"><button type="button">Update</button></form><hr>
<div class="links"><span><a href="#">Hide Legend</a> <i>|</i> <a href="#">Show Previous</a></span><a href="#">Show RRD Command</a></div></div>
<traffic-chart set="${set}"></traffic-chart>
<footer>Powered by <a href="#">LibreNMS 2014.master</a>.<br>LibreNMS is <a href="#">Free Software</a>, released under the <a href="#">GNU GPLv3</a>.<br>Copyright © 2013-2014 by the LibreNMS Contributors.<br>Copyright © 2006-2012 by Adam Armstrong.</footer>
<download-shelf style="font:11px 'Open Sans',sans-serif"></download-shelf>`;
});

/* ---------- taskbar ---------- */
const TAIL = [['-opera'], ['globe', 'NFV – hve...'], ['-clap'], ['conG', 'Connectif...'], ['conB', 'Connectif...'], ['utor', 'µTorrent 3...'], ['spot', 'Spotify'], ['skype', 'Skype™ - ...'], ['perf', 'Windows ...'], ['vm', 'Windows ...'], ['sys', 'System']];
const TASKS = {
  day: [['folder', 'A.Million....', 'g'], ['folderdb', 'Dropbox (...', 'g'], ['folder', 'Screenshots'], ['-rdp'], ['chrome', 'Google ...', 'hot stack'], ...TAIL, ['photo', 'net pp23 f...', 'g'], ['photo', 'Screensho...'], ['pad', 'Untitled - ...'], ['vol', 'Volume M...'], ['dropbox', 'Dropbox P...']],
  night: [['folder', 'A.Million....', 'g'], ['folderdb', 'Dropbox (...'], ['-rdp'], ...['Deltakarin...', 'Nedlastin...', 'Networkin...', 'Videooppt...', 'LibreNMS ...', 'Værvarsel ...', 'Speedtest...', 'HackRF O...', 'Signals - ...', 'Altibox TV...', 'Download...', 'www.n-tri...', 'tv.polarpa...', '400 usd in...'].map((t, i) => ['chrome', t, (i < 13 ? 'g' : '') + (i === 4 ? ' hot' : '')]), ...TAIL, ['photo', 'net pp23 f...'], ['pad', 'Untitled - ...'], ['vol', 'Volume M...'], ['dropbox', 'Dropbox P...']]
};
define('task-bar', `
:host{display:flex;flex-direction:column;height:100%;background:linear-gradient(90deg,#5a6a76,#1a262e 3px,#05090c 7px);color:#fff;min-width:0}
.orb{border:0;background:none;padding:0 0 7px;height:63px;display:grid;place-items:center}
.t{flex:none;display:flex;align-items:center;gap:5px;height:28px;margin-bottom:4px;padding:0 0 0 10px;border:1px solid #8a8f92;border-top-color:#a5a8aa;border-radius:3px;background:linear-gradient(172deg,#a4a6a8,#5c5f61 26%,#1d2123 55%,#181c1e);font:inherit;color:#fff;white-space:nowrap;text-align:left;overflow:hidden}
.g{height:30px;margin:0;border-bottom:0;border-radius:3px 3px 0 0}
.hot{background:linear-gradient(172deg,#c6c8c9,#8d9092 40%,#64686b 60%,#8b8f91)}
.stack{margin-right:8px;box-shadow:3px 0 0 #111,4px 0 0 #777,6px 0 0 #111,7px 0 0 #555}
.bare{border:0;background:none;justify-content:center;padding:0}
.tray{display:flex;justify-content:space-around;padding:8px 3px 5px}
.up{margin:auto 0 0;padding:0 0 2px 4px;border:0;background:none;text-align:left;height:20px}
.clock{text-align:center;font:12px/17px "Open Sans",sans-serif;padding-bottom:2px}
.show{height:14px;border:1px solid #777;background:linear-gradient(170deg,#777,#181c1e 40%);margin:0;padding:0}
`, e => {
  const s = e.getAttribute('set');
  return `<button class="orb" aria-label="Start"><svg width="38" height="38" viewBox="0 0 38 38"><defs><radialGradient id="o" cx=".5" cy=".85" r=".9"><stop offset="0" stop-color="#5fe0ff"/><stop offset=".5" stop-color="#1a6aa8"/><stop offset="1" stop-color="#7e9db0"/></radialGradient></defs><circle cx="19" cy="19" r="18" fill="url(#o)" stroke="#5a7f95"/><path d="M10 12q4-3 8-1l-1.500 8q-4-2-8 .5z" fill="#e8562a"/><path d="M20 11.500q4 2 8-1l-1.500 8.500q-4 2-8 .5z" fill="#8cc63f"/><path d="M8 21q4-2.500 8-.5l-1.500 8q-4-2-8 1z" fill="#3fa0e8"/><path d="M18 21q4 2 8-.5l-1.500 8q-4 2.500-8 .5z" fill="#fcc62d"/><path d="M3 15Q7 3 19 3t16 12q-16 6-32 0z" fill="#fff" opacity=".25"/></svg></button>
${TASKS[s].map(([i, t, c]) => i[0] === '-' ? `<button class="t bare" aria-label="${i.slice(1)}">${ic(i.slice(1))}</button>` : `<button class="t ${c || ''}">${ic(i, 15)}<span>${t}</span></button>`).join('')}
<button class="up" aria-label="Show hidden icons">${ic('left', 12)}</button>
<div class="tray">${['flag', 'net', 'spk', 'dbxerr'].map(n => ic(n)).join('')}</div>
<div class="clock">${s === 'night' ? '02:37' : '10:35'}<br>lørdag<br>04.10.2014</div><button class="show" aria-label="Show desktop"></button>`;
});

/* ---------- offline page and preferences dialog ---------- */
define('offline-page', `
:host{display:block;flex:1;background:#e6e6e6;padding-top:64px;position:relative;font-family:"Liberation Sans",sans-serif}
.card{width:675px;height:233px;margin:0 auto;background:#fbfbfb;border:1px solid #bbb;border-bottom:2px solid #999;border-radius:2px;display:flex;flex-direction:column;align-items:center;padding-top:38px;color:#555}
h1{font:24px/30px "Liberation Sans",sans-serif;margin:19px 0 34px}
.row{display:flex;gap:21px}
button{height:40px;padding:0;width:80px;font:16px "Liberation Sans",sans-serif;border:1px solid #bbb;border-radius:2px;background:linear-gradient(#f2f2f2,#dedede);color:#555}
button.p{width:146px;background:#4d8df6;border-color:#3a79e0;color:#fff}
prefs-dialog{position:absolute;left:199px;top:385px}`,
  () => `<div class="card">${ic('sad', 30)}<h1>Denne nettsiden er ikke tilgjengelig</h1><div class="row"><button class="p">Last inn på nytt</button><button>Mer</button></div></div><prefs-dialog></prefs-dialog>`);

define('prefs-dialog', `
:host{display:flex;flex-direction:column;width:466px;height:473px;padding:0 7px 7px;background:#d9fbfb;border:1px solid #445;border-radius:7px;box-shadow:0 2px 10px #0007;font:11px/15px "Open Sans",sans-serif;color:#111}
header{display:flex;align-items:center;gap:5px;height:29px}
header button{margin:0 0 10px auto;width:47px;height:19px;border:1px solid #889;border-top:0;background:#e9fdfd;padding:0;display:grid;place-items:center}
.tools{display:flex;background:#fff;height:60px;border:1px solid #889;border-bottom-color:#bbb;padding-left:5px;flex:none}
.tools button{border:0;background:none;padding:3px 0 0;font:inherit;width:54px;display:flex;flex-direction:column;align-items:center;gap:2px}
.tools .on{background:#9fd2f4;border:1px solid #4a9ad0;border-width:0 1px;width:49px;margin:0 5px 0 3px}
.tools .w{width:62px}
.pane{flex:1;background:#f0f0f0;border:1px solid #889;border-top:0;padding:14px 12px 11px;display:flex;flex-direction:column}
fieldset{border:1px solid #d9e3ea;border-width:1px 0;margin:0 0 13px;padding:0 11px 0 13px}
legend{margin-left:-10px;padding:0 4px}
.r{display:flex;align-items:center;justify-content:space-between}
.r1{height:50px;margin-top:5px}.r2{height:48px}.r3{height:42px;justify-content:flex-start;gap:10px}
a{color:#1a7fd4;text-decoration:none}
.s{display:grid}.s>*{grid-area:1/1}.s ui-icon{justify-self:end;align-self:center;pointer-events:none}
select{appearance:none;height:23px;width:133px;border:1px solid #777;border-radius:3px;background:linear-gradient(#f2f2f2,#ddd);font:inherit;padding:0 4px;color:#111}
.r3 select{width:166px}
label{display:flex;align-items:center;gap:3px}
input{margin:0;width:13px;height:13px;accent-color:#8fa4c4}
.foot{display:flex;align-items:center;gap:8px;margin-top:auto}
.foot a{display:flex;gap:3px;align-items:center;margin-right:auto}
.foot button{width:74px;height:23px;border:1px solid #888;border-radius:3px;background:linear-gradient(#f2f2f2,#ddd);font:inherit;padding:0;color:#111}
.foot .ok{border:2px solid #3cb0e8;background:#dff3fc}.foot button:disabled{color:#999;border-color:#bbb;background:#f3f3f3}`,
  () => `<header>${ic('dropbox', 15)}Dropbox Preferences<button aria-label="Close">${ic('cls', 12)}</button></header>
<div class="tools"><button>${ic('gswitch', 34)}General</button><button>${ic('person', 34)}Account</button><button class="on">${ic('pics', 34)}Import</button><button class="w">${ic('dial', 34)}Bandwidth</button><button>${ic('wifi', 34)}Proxies</button></div>
<div class="pane"><fieldset><legend>Camera Upload</legend><div class="r r1"><span>Import photos and videos to<br>Dropbox</span><a href="#">Change AutoPlay Settings</a></div><div class="r r2"><label for="cam">Enable camera uploads for:</label><span class="s"><select id="cam"><option>Photos and videos</option></select>${ic('caret', 14)}</span></div></fieldset>
<fieldset><legend>Screenshots</legend><div class="r r3"><label><input type="checkbox" checked>Save screenshots to your:</label><span class="s"><select aria-label="Dropbox account"><option>Personal Dropbox</option></select>${ic('caret', 14)}</span></div></fieldset>
<div class="foot"><a href="#">${ic('help', 14)}Help</a><button class="ok">OK</button><button>Cancel</button><button disabled>Apply</button></div></div>`);

/* ---------- photo viewer ---------- */
define('saved-shot', ':host{zoom:.5;display:grid;grid-template-columns:calc(50% - 103px) 103px 50%;grid-template-rows:100%;width:100%;aspect-ratio:16/5;overflow:hidden}',
  () => `<browser-window host="librenms.pp23.polarparty.no" path="/graphs/to=1412387940/id=157/type=port_bits/from=1412042340/?"><libre-page set="night"></libre-page></browser-window><task-bar set="night"></task-bar><browser-window glass host="www.n-trig.com"><offline-page></offline-page></browser-window>`);

define('photo-viewer', `
:host{display:flex;flex-direction:column;height:100%;min-width:0;background:#eef2fb}
header{display:flex;align-items:center;gap:4px;height:22px;padding:0 4px 0 1px;position:relative;overflow:hidden;background:linear-gradient(90deg,#e8fbfd,#fff 5%,#fff 17%,#c9f8fd 22%,#b0f6fd 45%,#d9fdff 60%,#b4f8fd 80%,#d5fbfd 92%,#e6fdfe);border-bottom:1px solid #66737c}
header span{position:relative;color:#000;font-size:12px}
.ghost{position:absolute;inset:0;width:100%;height:100%;filter:blur(4px);opacity:.5}
caption-buttons{margin-left:auto;position:relative;align-self:flex-start}
.menu{display:flex;align-items:center;height:29px;padding:0 10px 0 17px;background:linear-gradient(#f5fafd,#e8f1f8 48%,#d8e5f1 50%,#d6e3f0);border:1px solid #9cb0cc;border-top-color:#fff}
.menu button{display:flex;align-items:center;border:0;background:none;padding:0;font:inherit;color:#1e395b;gap:12px;margin-right:14px}
.menu .n{margin-right:28px}
.menu .h{margin:0 0 0 auto}
main{flex:1;display:flex;align-items:center;border-bottom:1px solid #77808a;min-height:0}
.bottom{height:56px;background:#e5ffff;display:grid;place-items:center;flex:none}
.pill{display:flex;align-items:center;height:32px;width:404px;border:1px solid #a9b4b8;border-radius:16px;background:#e3f5fa;margin-top:4px;padding:0 17px 0 30px}
.pill button{display:flex;align-items:center;justify-content:center;border:0;background:none;padding:0;color:#1c4ab0;height:24px}
.pill .fit{margin:0 21px 0 auto}
.pill .ccw{margin:0 18px 0 16px}
.pill .nav{width:53px;flex:none;border:1px solid #566067;background:linear-gradient(#e4edef,#c5d0d3 45%,#a3b1b4 50%,#cfdcdf);border-radius:8px 0 0 8px}
.pill .nx{border-radius:0 8px 8px 0}
.pill .play{width:48px;height:48px;margin:0 -3px;position:relative;border-radius:50%;background:#e3f5fa;border:1px solid #a9b4b8;flex:none}
.sep{width:1px;height:19px;background:#b5c0c4;margin:0 14px}`,
  () => `<header><svg class="ghost" viewBox="0 0 1920 22" preserveAspectRatio="none"><g fill="#5b9be0"><path d="M400 5h16v13h-16z"/><path d="M422 9h35v8h-35zM565 9h6v8h-6zM630 9h140v8H630zM780 5h14v13h-14zM805 9h130v8H805zM1000 5h16v13h-16zM1024 9h130v8h-130zM1220 9h140v8h-140z" fill="#7fa9dc"/></g></svg>${ic('photo')}<span>Screenshot 2014-10-04 02.37.12.png - Windows Photo Viewer</span><caption-buttons glass="pale"></caption-buttons></header>
<div class="menu"><button>File${ic('caret', 14)}</button><button>Print${ic('caret', 14)}</button><button class="n">E-mail</button><button>Burn${ic('caret', 14)}</button><button>Open${ic('caret', 14)}</button><button class="h" aria-label="Help">${ic('help')}</button></div>
<main><saved-shot></saved-shot></main>
<div class="bottom"><div class="pill"><button aria-label="Zoom">${ic('zoom', 17)}${ic('caret', 15)}</button><button class="fit" aria-label="Actual size">${ic('fit', 18)}</button><button class="nav" aria-label="Previous">${ic('prev')}</button><button class="play" aria-label="Slide show"><svg width="42" height="42" viewBox="0 0 42 42"><defs><linearGradient id="p" x2="0" y2="1"><stop offset="0" stop-color="#d8d8f0"/><stop offset=".48" stop-color="#5a62c0"/><stop offset=".5" stop-color="#000c90"/><stop offset=".72" stop-color="#0458d8"/><stop offset="1" stop-color="#5ff0ff"/></linearGradient></defs><circle cx="21" cy="21" r="20" fill="url(#p)" stroke="#1c2c9c" stroke-width="1.500"/><rect x="10" y="12" width="22" height="18" rx="2" fill="#f3f3f5"/><path d="M13 15h16v12H13z" fill="#9cc8e8"/><path d="M13 22q6-3 16 2v3H13z" fill="#5c8a6c"/></svg></button><button class="nav nx" aria-label="Next">${ic('next')}</button><button class="ccw" aria-label="Rotate counterclockwise">${ic('ccw')}</button><button aria-label="Rotate clockwise">${ic('cw')}</button><i class="sep"></i><button aria-label="Delete">${ic('del')}</button></div></div>`);

define('desk-top', ':host{display:grid;grid-template-columns:calc(50% - 103px) 103px 50%;grid-template-rows:100%;height:100vh;overflow:hidden}',
  () => `<browser-window host="librenms.pp23.polarparty.no" path="/graphs/to=1412423940/id=157/type=port_bits/from=1412049540/?"><libre-page set="day"></libre-page></browser-window><task-bar set="day"></task-bar><photo-viewer></photo-viewer>`);
</script>
</body>
</html>
